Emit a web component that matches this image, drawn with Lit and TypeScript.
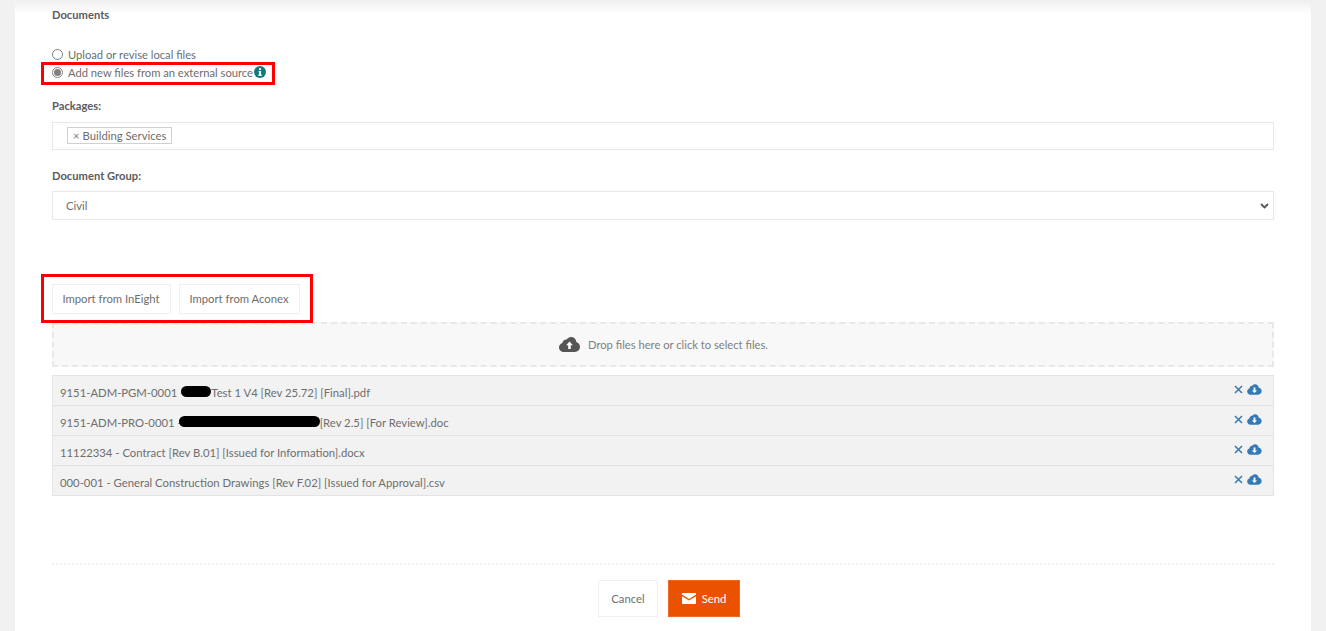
import { LitElement, html, css } from "lit";
import { customElement } from "lit/decorators.js";

const cloudDown = html`<svg class="ico-dl" viewBox="0 0 16 12"><path fill="#337ab7" d="M3.6 11.6C1.6 11.6 0 10.2 0 8.2c0-1.500 1-2.800 2.300-3.200C2.500 2.900 4.100 1.500 6 1.500c.5-.9 1.500-1.300 2.500-1.300 2.200 0 3.900 1.600 4 3.700 1.900.3 3.300 1.900 3.300 3.800 0 2.200-1.700 3.900-3.900 3.900z"/><path fill="#fff" d="M7 3.800h2v3.200h1.800L8 9.900 5.200 7H7z"/></svg>`;

const files = [
  { pre: "9151-ADM-PGM-0001 -", blob: 30, post: "Test 1 V4 [Rev 25.72] [Final].pdf" },
  { pre: "9151-ADM-PRO-0001 -", blob: 141, post: "[Rev 2.5] [For Review].doc" },
  { pre: "11122334 - Contract [Rev B.01] [Issued for Information].docx", blob: 0, post: "" },
  { pre: "000-001 - General Construction Drawings [Rev F.02] [Issued for Approval].csv", blob: 0, post: "" },
];

@customElement("app-root")
export class AppRoot extends LitElement {
  static styles = css`
    :host { display: block; height: 631px; overflow: hidden; background: #f1f1f1; font-family: Lato, "Open Sans", sans-serif; font-size: 11.3px; color: #6e6e6e; }
    .card { position: relative; margin: 0 15px; height: 631px; box-sizing: border-box; background: #fff; padding: 0 37px; display: flex; flex-direction: column; }
    .shade { position: absolute; left: 0; right: 0; top: 0; height: 14px; background: linear-gradient(#efefef, #fff); }
    .title { position: relative; margin-top: 8px; height: 14px; line-height: 14px; font-weight: 700; color: #5c5c5c; font-size: 11.2px; }
    .radios { margin-top: 23px; display: flex; flex-direction: column; font-size: 11.2px; }
    .radio { display: flex; align-items: center; height: 18px; gap: 5px; }
    .dot { width: 9px; height: 9px; border: 1px solid #808080; border-radius: 50%; background: #fff; box-sizing: content-box; display: flex; align-items: center; justify-content: center; }
    .dot i { width: 7px; height: 7px; border-radius: 50%; background: #808080; }
    .info { width: 12px; height: 12px; margin-left: -4px; display: block; }
    label { display: block; font-weight: 700; color: #5c5c5c; line-height: 14px; font-size: 11.2px; }
    .pk { margin-top: 18px; }
    .box { border: 1px solid #e8e8e8; box-sizing: border-box; background: #fff; }
    .tags { margin-top: 9px; height: 28px; display: flex; align-items: center; padding: 0 0 2px 14px; }
    .tag { height: 17px; box-sizing: border-box; border: 1px solid #d0d0d0; padding: 0 5px; display: flex; align-items: center; gap: 3px; }
    .tag b { font-weight: 400; color: #808080; }
    .dg { margin-top: 19px; }
    .select { margin-top: 8px; height: 29px; display: flex; align-items: center; justify-content: space-between; padding: 0 4px 1px 13px; }
    .chev { width: 9px; height: 6px; margin-top: 1px; }
    .imports { margin-top: 64px; display: flex; gap: 8px; }
    .btn { height: 30px; box-sizing: border-box; border: 1px solid #f0f0f0; background: #fff; display: flex; align-items: center; justify-content: center; color: #6e6e6e; font-family: inherit; font-size: 11.3px; padding: 0; }
    .imports .btn { padding: 0 1px 1px 0; }
    .imports .a { width: 119px; }
    .imports .b { width: 121px; }
    .drop { margin-top: 8px; height: 45px; box-sizing: border-box; border: 2px dashed #e8e8e8; background: #f8f8f8; display: flex; align-items: center; justify-content: center; gap: 8px; color: #808080; font-size: 11.2px; padding-left: 1px; }
    .up { width: 21px; height: 15px; }
    .list { margin-top: 8px; border: 1px solid #e5e5e5; border-bottom: 0; background: #f2f2f2; display: flex; flex-direction: column; }
    .row { height: 30px; box-sizing: border-box; border-bottom: 1px solid #e3e3e3; padding: 0 11px 0 7px; display: flex; align-items: center; justify-content: space-between; }
    .name { display: flex; align-items: center; white-space: pre; padding-top: 4px; }
    .blob { display: inline-block; height: 11px; background: #000; border-radius: 6px; margin-left: -3px; margin-top: -2px; }
    .acts { display: flex; align-items: center; gap: 4px; margin-top: -3px; }
    .x { width: 9px; height: 9px; }
    .ico-dl { width: 15px; height: 11px; display: block; }
    .sep { margin-top: 67px; border-top: 2px dotted #f0f0f0; }
    .foot { margin-top: 15px; display: flex; justify-content: center; gap: 10px; padding-left: 12px; }
    .cancel { width: 60px; height: 37px; }
    .send { width: 72px; height: 37px; border: 1px solid #f0692a; background: #eb5200; color: #fff; gap: 6px; }
    .env { width: 14px; height: 11px; }
    .mark { position: absolute; border: 3px solid #f00; box-sizing: border-box; pointer-events: none; }
    .m1 { left: 26px; top: 62px; width: 234px; height: 23px; }
    .m2 { left: 26px; top: 274px; width: 272px; height: 49px; }
  `;

  render() {
    return html`<div class="card">
      <div class="shade"></div>
      <div class="title">Documents</div>
      <div class="radios">
        <div class="radio"><span class="dot"></span>Upload or revise local files</div>
        <div class="radio"><span class="dot"><i></i></span>Add new files from an external source
          <svg class="info" viewBox="0 0 12 12"><circle cx="6" cy="6" r="6" fill="#0f7c80"/><path fill="#fff" d="M5 2.300h2v1.700H5zM4.600 5h2.400v3.600h.7V10H4.400V8.600H5V6.300h-.4z"/></svg>
        </div>
      </div>
      <label class="pk">Packages:</label>
      <div class="box tags"><span class="tag"><b>×</b>Building Services</span></div>
      <label class="dg">Document Group:</label>
      <div class="box select"><span>Civil</span>
        <svg class="chev" viewBox="0 0 9 6"><path d="M1 1l3.500 3.500L8 1" fill="none" stroke="#555" stroke-width="1.800"/></svg>
      </div>
      <div class="imports">
        <button class="btn a">Import from InEight</button>
        <button class="btn b">Import from Aconex</button>
      </div>
      <div class="drop">
        <svg class="up" viewBox="0 0 21 15"><path fill="#555" d="M5 15C2.200 15 0 13 0 10.500 0 8.400 1.400 6.700 3.300 6.100 3.600 3.900 5.500 2.400 7.600 2.500 8.700 1 10.300 0 12.200 0c2.800 0 5 2.200 5.100 5 2.100.5 3.700 2.500 3.700 4.800 0 2.900-2.300 5.200-5.200 5.200z"/><path fill="#fff" d="M10.500 4.500l3.400 3.700h-2.100v3.700H9.200V8.200H7.100z"/></svg>
        Drop files here or click to select files.
      </div>
      <div class="list">
        ${files.map((f) => html`<div class="row">
          <span class="name">${f.pre}${f.blob ? html`<span class="blob" style="width:${f.blob}px"></span>` : ""}${f.post}</span>
          <span class="acts">
            <svg class="x" viewBox="0 0 9 9"><path d="M1 1l7 7M8 1L1 8" stroke="#337ab7" stroke-width="1.500" fill="none"/></svg>
            ${cloudDown}
          </span>
        </div>`)}
      </div>
      <div class="sep"></div>
      <div class="foot">
        <button class="btn cancel">Cancel</button>
        <button class="btn send">
          <svg class="env" viewBox="0 0 14 11"><path fill="#fff" d="M1 0h12c.6 0 1 .4 1 1v.6L7 6 0 1.600V1c0-.6.4-1 1-1z"/><path fill="#fff" d="M0 3.200L7 7.500l7-4.300V10c0 .6-.4 1-1 1H1c-.6 0-1-.4-1-1z"/></svg>
          Send
        </button>
      </div>
      <div class="mark m1"></div>
      <div class="mark m2"></div>
    </div>`;
  }
}
